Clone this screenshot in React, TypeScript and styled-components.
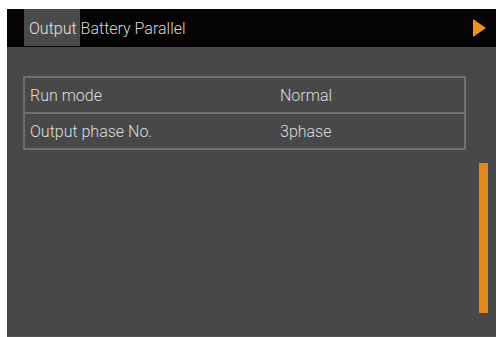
import React from "react";
import styled, { createGlobalStyle } from "styled-components";

const GlobalStyle = createGlobalStyle`
  html, body {
    margin: 0;
    padding: 0;
    background: #ffffff;
  }
  body {
    font-family: Roboto, "Liberation Sans", sans-serif;
  }
`;

const Page = styled.div`
  width: 496px;
  height: 337px;
  padding: 9px 0 0 7px;
  box-sizing: border-box;
  overflow: hidden;
`;

const Screen = styled.div`
  display: flex;
  flex-direction: column;
  height: 328px;
  background: #484848;
`;

const Header = styled.div`
  display: flex;
  align-items: stretch;
  height: 38px;
  background: #050304;
  padding-left: 17px;
`;

const Tab = styled.div<{ $active?: boolean }>`
  display: flex;
  align-items: center;
  padding-top: 2px;
  margin-bottom: 1px;
  font-size: 16px;
  font-weight: 300;
  color: ${(p) => (p.$active ? "#e6e6e6" : "#d8d8d8")};
  background: ${(p) => (p.$active ? "#4a4a4a" : "transparent")};
  padding-left: ${(p) => (p.$active ? "5px" : "1px")};
  padding-right: ${(p) => (p.$active ? "3px" : "4px")};
`;

const Spacer = styled.div`
  flex: 1;
`;

const NextArrow = styled.div`
  display: flex;
  align-items: center;
  padding-right: 10px;
`;

const Body = styled.div`
  flex: 1;
  display: flex;
  align-items: flex-start;
  padding-left: 16px;
  border-bottom: 1px solid #525252;
`;

const Main = styled.div`
  width: 443px;
  padding-top: 29px;
`;

const Table = styled.div`
  border: 2px solid #707070;
  border-radius: 1px;
`;

const Row = styled.div`
  display: flex;
  align-items: center;
  height: 34px;
  font-size: 16px;
  font-weight: 300;
  color: #dedede;
  & + & {
    border-top: 2px solid #707070;
  }
`;

const Label = styled.div`
  width: 250px;
  padding-left: 5px;
`;

const Value = styled.div`
  flex: 1;
`;

const ScrollThumb = styled.div`
  margin-left: 13px;
  margin-top: 116px;
  width: 9px;
  height: 150px;
  background: #e0891c;
  border-radius: 1px;
`;

export default function App() {
  return (
    <>
      <GlobalStyle />
      <Page>
        <Screen>
          <Header>
            <Tab $active>Output</Tab>
            <Tab>Battery Parallel</Tab>
            <Spacer />
            <NextArrow>
              <svg width="13" height="18" viewBox="0 0 13 18">
                <polygon points="0,0 13,9 0,18" fill="#f0901e" />
              </svg>
            </NextArrow>
          </Header>
          <Body>
            <Main>
              <Table>
                <Row>
                  <Label>Run mode</Label>
                  <Value>Normal</Value>
                </Row>
                <Row>
                  <Label>Output phase No.</Label>
                  <Value>3phase</Value>
                </Row>
              </Table>
            </Main>
            <ScrollThumb />
          </Body>
        </Screen>
      </Page>
    </>
  );
}
